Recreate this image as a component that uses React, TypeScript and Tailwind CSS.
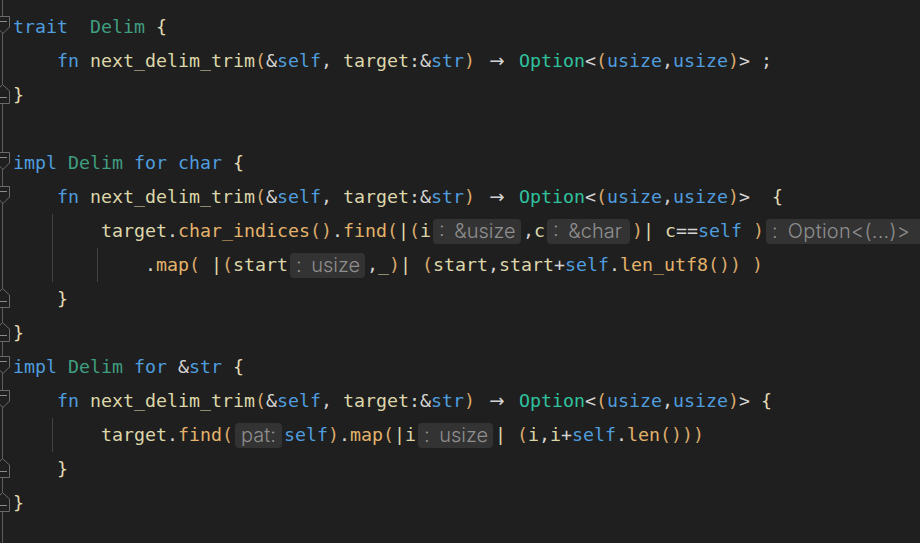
import React from 'react'

// token colours for the rust highlighter look
const C = {
  k: 'text-[#4f9dde]',
  t: 'text-[#3f9e80]',
  o: 'text-[#2fc29e]',
  f: 'text-[#dcd6a8]',
  v: 'text-[#ddd6aa]',
  m: 'text-[#e3b36b]',
  p: 'text-[#d9a96a]',
  w: 'text-[#d4d4d4]',
  b: 'text-[#e4dcb4]',
}

// inlay hint boxes, sized like the editor draws them
const H: Record<string, string> = {
  ': &usize': 'w-[88px]',
  ': &char': 'w-[83px]',
  ': Option<(...)>': 'w-[157px] tracking-[0.3px]',
  ': usize': 'w-[75px]',
  'pat:': 'w-[47px]',
}

type Kind = keyof typeof C | 'h' | 'a'
type Tok = [Kind, string]

type Line = {
  indent: 0 | 4 | 8 | 12
  guides?: number
  fold?: 'open' | 'close'
  toks: Tok[]
}

const sig: Tok[] = [
  ['k', 'fn'], ['w', ' '], ['f', 'next_delim_trim'], ['p', '('], ['w', '&'], ['k', 'self'], ['w', ', '],
  ['v', 'target'], ['w', ':&'], ['k', 'str'], ['p', ')'], ['w', ' '], ['a', '->'], ['w', ' '],
  ['o', 'Option'], ['w', '<'], ['p', '('], ['k', 'usize'], ['w', ','], ['k', 'usize'], ['p', ')'], ['w', '>'],
]

const lines: Line[] = [
  { indent: 0, fold: 'open', toks: [['k', 'trait'], ['w', '  '], ['t', 'Delim'], ['w', ' '], ['b', '{']] },
  { indent: 4, toks: [...sig, ['w', ' ;']] },
  { indent: 0, fold: 'close', toks: [['b', '}']] },
  { indent: 0, toks: [] },
  { indent: 0, fold: 'open', toks: [['k', 'impl'], ['w', ' '], ['t', 'Delim'], ['w', ' '], ['k', 'for'], ['w', ' '], ['k', 'char'], ['w', ' '], ['b', '{']] },
  { indent: 4, fold: 'open', toks: [...sig, ['w', '  '], ['b', '{']] },
  {
    indent: 8, guides: 1, toks: [
      ['v', 'target'], ['w', '.'], ['m', 'char_indices'], ['p', '()'], ['w', '.'], ['m', 'find'], ['p', '('], ['v', '|'], ['p', '('],
      ['v', 'i'], ['h', ': &usize'], ['w', ','], ['v', 'c'], ['h', ': &char'], ['p', ')'], ['v', '|'], ['w', ' '], ['v', 'c'], ['w', '=='],
      ['k', 'self'], ['w', ' '], ['p', ')'], ['h', ': Option<(...)>'],
    ],
  },
  {
    indent: 12, guides: 2, toks: [
      ['w', '.'], ['m', 'map'], ['p', '('], ['w', ' '], ['v', '|'], ['p', '('], ['v', 'start'], ['h', ': usize'], ['w', ','], ['v', '_'],
      ['p', ')'], ['v', '|'], ['w', ' '], ['p', '('], ['v', 'start'], ['w', ','], ['v', 'start'], ['w', '+'], ['k', 'self'], ['w', '.'],
      ['m', 'len_utf8'], ['p', '())'], ['w', ' '], ['p', ')'],
    ],
  },
  { indent: 4, fold: 'close', toks: [['b', '}']] },
  { indent: 0, fold: 'close', toks: [['b', '}']] },
  { indent: 0, fold: 'open', toks: [['k', 'impl'], ['w', ' '], ['t', 'Delim'], ['w', ' '], ['k', 'for'], ['w', ' &'], ['k', 'str'], ['w', ' '], ['b', '{']] },
  { indent: 4, fold: 'open', toks: [...sig, ['w', ' '], ['b', '{']] },
  {
    indent: 8, guides: 1, toks: [
      ['v', 'target'], ['w', '.'], ['m', 'find'], ['p', '('], ['h', 'pat:'], ['k', 'self'], ['p', ')'], ['w', '.'], ['m', 'map'], ['p', '('],
      ['v', '|'], ['v', 'i'], ['h', ': usize'], ['v', '|'], ['w', ' '], ['p', '('], ['v', 'i'], ['w', ','], ['v', 'i'], ['w', '+'],
      ['k', 'self'], ['w', '.'], ['m', 'len'], ['p', '()))'],
    ],
  },
  { indent: 4, fold: 'close', toks: [['b', '}']] },
  { indent: 0, fold: 'close', toks: [['b', '}']] },
]

function FoldMark({ kind }: { kind?: 'open' | 'close' }) {
  return (
    <svg width="13" height="34" viewBox="0 0 13 34" className="block">
      {kind === 'open' && (
        <>
          <path d="M-3 6.5H9.5V17L3 23.5L-3.5 17Z" fill="#1f1f1f" stroke="#6b6b6b" />
          <path d="M0 11.5H7" stroke="#8a8a8a" />
        </>
      )}
      {kind === 'close' && (
        <>
          <path d="M2.5 6.5L9.5 13V25.5H-3.5V13Z" fill="#1f1f1f" stroke="#6b6b6b" />
          <path d="M0 19.5H7" stroke="#8a8a8a" />
        </>
      )}
    </svg>
  )
}

function Indent({ n, guides = 0 }: { n: number; guides?: number }) {
  if (n === 0) return null
  if (guides === 0) return <span style={{ width: n * 11 }} className="shrink-0" />
  if (guides === 1)
    return (
      <>
        <span className="w-[39px] shrink-0" />
        <span className="w-[49px] shrink-0 border-l border-[#424242]" />
      </>
    )
  return (
    <>
      <span className="w-[39px] shrink-0" />
      <span className="w-[45px] shrink-0 border-l border-[#424242]" />
      <span className="w-[48px] shrink-0 border-l border-[#424242]" />
    </>
  )
}

function Token({ tok }: { tok: Tok }) {
  const [kind, text] = tok
  if (kind === 'h')
    return (
      <span
        className={`mx-[2px] h-[25px] shrink-0 flex items-center pl-[6px] rounded-[4px] bg-[#333333] font-['Inter',sans-serif] text-[20px] font-light [word-spacing:4px] text-[#8e8e8e] overflow-hidden ${H[text]}`}
      >
        {text}
      </span>
    )
  if (kind === 'a')
    return <span className="w-[22px] text-center font-['DejaVu_Sans',sans-serif] text-[#d4d4d4]">→</span>
  return <span className={C[kind]}>{text}</span>
}

export default function App() {
  return (
    <div className="h-screen w-full overflow-hidden bg-[#1f1f1f] flex font-['DejaVu_Sans_Mono',monospace] text-[18.27px]">
      <div className="w-[13px] shrink-0 pt-[10px] bg-[linear-gradient(to_right,transparent_2px,#5c5c5c_2px,#5c5c5c_3px,transparent_3px)]">
        {lines.map((l, i) => (
          <FoldMark key={i} kind={l.fold} />
        ))}
      </div>
      <div className="flex-1 min-w-0 pt-[10px]">
        {lines.map((l, i) => (
          <div key={i} className="flex h-[34px]">
            <Indent n={l.indent} guides={l.guides} />
            <div className="flex items-center whitespace-pre">
              {l.toks.map((t, j) => (
                <Token key={j} tok={t} />
              ))}
            </div>
          </div>
        ))}
      </div>
    </div>
  )
}
